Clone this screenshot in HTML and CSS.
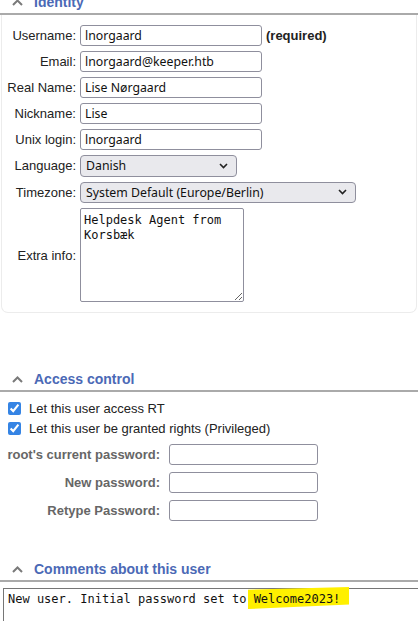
FILE: index.html
```html
<!DOCTYPE html>
<html lang="en">
<head>
<meta charset="utf-8">
<title>User</title>
<link rel="stylesheet" href="styles.css">
</head>
<body>
<section class="box identity">
  <div class="box-title">
    <svg class="chev" width="11" height="7" viewBox="0 0 11 7"><polyline points="1,6 5.5,1.5 10,6" fill="none" stroke="#7a7a7a" stroke-width="2"/></svg>
    <span>Identity</span>
  </div>
  <div class="card">
    <div class="form">
      <label class="lbl">Username:</label>
      <div class="field"><input class="txt" type="text" value="lnorgaard"><b class="req">(required)</b></div>
      <label class="lbl">Email:</label>
      <div class="field"><input class="txt" type="text" value="lnorgaard@keeper.htb"></div>
      <label class="lbl">Real Name:</label>
      <div class="field"><input class="txt" type="text" value="Lise Nørgaard"></div>
      <label class="lbl">Nickname:</label>
      <div class="field"><input class="txt" type="text" value="Lise"></div>
      <label class="lbl">Unix login:</label>
      <div class="field"><input class="txt" type="text" value="lnorgaard"></div>
      <label class="lbl">Language:</label>
      <div class="field"><div class="select lang"><span>Danish</span><svg width="9" height="6" viewBox="0 0 9 6"><polyline points="1,1 4.5,4.5 8,1" fill="none" stroke="#222" stroke-width="1.6"/></svg></div></div>
      <label class="lbl">Timezone:</label>
      <div class="field"><div class="select tz"><span>System Default (Europe/Berlin)</span><svg width="9" height="6" viewBox="0 0 9 6"><polyline points="1,1 4.5,4.5 8,1" fill="none" stroke="#222" stroke-width="1.6"/></svg></div></div>
      <label class="lbl">Extra info:</label>
      <div class="field"><textarea class="extra">Helpdesk Agent from Korsbæk</textarea></div>
    </div>
  </div>
</section>

<section class="box access">
  <div class="box-title">
    <svg class="chev" width="11" height="7" viewBox="0 0 11 7"><polyline points="1,6 5.5,1.5 10,6" fill="none" stroke="#7a7a7a" stroke-width="2"/></svg>
    <span>Access control</span>
  </div>
  <div class="checks">
    <label class="check"><input type="checkbox" checked><span>Let this user access RT</span></label>
    <label class="check"><input type="checkbox" checked><span>Let this user be granted rights (Privileged)</span></label>
  </div>
  <div class="pw">
    <label class="pwlbl">root's current password:</label>
    <input class="txt pwin" type="password">
    <label class="pwlbl">New password:</label>
    <input class="txt pwin" type="password">
    <label class="pwlbl">Retype Password:</label>
    <input class="txt pwin" type="password">
  </div>
</section>

<section class="box comments">
  <div class="box-title">
    <svg class="chev" width="11" height="7" viewBox="0 0 11 7"><polyline points="1,6 5.5,1.5 10,6" fill="none" stroke="#7a7a7a" stroke-width="2"/></svg>
    <span>Comments about this user</span>
  </div>
  <div class="comment">New user. Initial password set to <span class="mark">Welcome2023!</span></div>
</section>
</body>
</html>
```
FILE: styles.css
```css
html, body {
  margin: 0;
  padding: 0;
  overflow: hidden;
  background: #fff;
}
body {
  font-family: "Liberation Sans", Arial, sans-serif;
  font-size: 13px;
  color: #222;
  width: 418px;
  height: 621px;
}
.box-title {
  display: flex;
  align-items: center;
  gap: 11px;
  padding-left: 12px;
  height: 16px;
  line-height: 16px;
  padding-bottom: 3px;
  border-bottom: 2px solid #aaa;
  font-size: 14px;
  font-weight: bold;
  color: #4b69b6;
}
.chev { flex: none; }

.identity { margin-top: -6px; }
.card {
  margin: 0 1px;
  border: 1px solid #ececec;
  border-top: none;
  border-radius: 0 0 7px 7px;
  padding: 10px 0 10px 0;
}
.form {
  display: grid;
  grid-template-columns: 74px auto;
  column-gap: 4px;
  row-gap: 5px;
  align-items: center;
}
.lbl {
  text-align: right;
  white-space: nowrap;
}
.field {
  display: flex;
  align-items: center;
  gap: 4px;
}
.txt {
  box-sizing: border-box;
  width: 182px;
  height: 21px;
  margin: 0;
  padding: 0 4px;
  border: 1px solid #8f8f9d;
  border-radius: 3px;
  background: #fff;
  font-family: "Noto Sans", "Open Sans", sans-serif;
  font-size: 12.3px;
  color: #111;
  outline: none;
}
.req {
  font-weight: bold;
  color: #222;
}
.select {
  box-sizing: border-box;
  height: 21.5px;
  display: flex;
  align-items: center;
  justify-content: space-between;
  padding: 0 8px 0 5px;
  border: 1px solid #8f8f9d;
  border-radius: 4px;
  background: #e9e9ed;
  font-family: "Noto Sans", "Open Sans", sans-serif;
  font-size: 12.3px;
  color: #111;
}
.select.lang { width: 157px; }
.select.tz { width: 276px; }
.extra {
  box-sizing: border-box;
  width: 164px;
  height: 94px;
  margin: 0;
  padding: 4px 3px 2px;
  border: 1px solid #8f8f9d;
  border-radius: 2px;
  font-family: "DejaVu Sans Mono", monospace;
  font-size: 12px;
  line-height: 15px;
  color: #111;
  resize: both;
  outline: none;
}

.access { margin-top: 58px; }
.checks {
  padding: 6px 0 0 8px;
  display: flex;
  flex-direction: column;
}
.check {
  display: flex;
  align-items: center;
  gap: 8px;
  height: 20px;
}
.check input {
  margin: 0;
  width: 13px;
  height: 13px;
  accent-color: #3584e4;
}
.pw {
  margin-top: 6px;
  display: grid;
  grid-template-columns: 160px auto;
  column-gap: 9px;
  row-gap: 7px;
  align-items: center;
}
.pwlbl {
  text-align: right;
  font-weight: bold;
  color: #666;
  white-space: nowrap;
}
.pwin { width: 149px; }

.comments { margin-top: 40px; }
.comment {
  box-sizing: border-box;
  margin: 6px 0 0 3px;
  width: 430px;
  height: 60px;
  padding: 3px 4px;
  border: 1px solid #767676;
  font-family: "DejaVu Sans Mono", monospace;
  font-size: 12px;
  line-height: 15px;
  color: #111;
  white-space: pre;
}
.mark {
  position: relative;
  z-index: 0;
}
.mark::before {
  content: "";
  position: absolute;
  z-index: -1;
  left: -6px;
  right: -9px;
  top: -5px;
  bottom: -3px;
  background: #fff000;
  clip-path: polygon(0 12%, 100% 0, 100% 80%, 0 100%);
}
```
